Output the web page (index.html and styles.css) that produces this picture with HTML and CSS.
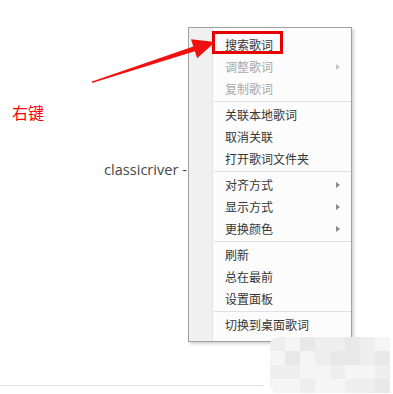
FILE: index.html
```html
<!DOCTYPE html>
<html lang="zh">
<head>
<meta charset="utf-8">
<link rel="stylesheet" href="styles.css">
</head>
<body>
<div class="page">
  <div class="content">
    <div class="hint">右键</div>
    <div class="title">classicriver -</div>
    <div class="rule"></div>
  </div>

  <div class="menu">
    <div class="item">搜索歌词</div>
    <div class="item disabled">调整歌词<span class="sub"></span></div>
    <div class="item disabled">复制歌词</div>
    <div class="sep"></div>
    <div class="item">关联本地歌词</div>
    <div class="item">取消关联</div>
    <div class="item">打开歌词文件夹</div>
    <div class="sep"></div>
    <div class="item">对齐方式<span class="sub"></span></div>
    <div class="item">显示方式<span class="sub"></span></div>
    <div class="item">更换颜色<span class="sub"></span></div>
    <div class="sep"></div>
    <div class="item">刷新</div>
    <div class="item">总在最前</div>
    <div class="item">设置面板</div>
    <div class="sep"></div>
    <div class="item">切换到桌面歌词</div>
  </div>

  <div class="highlight"></div>
  <svg class="arrow" width="393" height="394" viewBox="0 0 393 394">
    <polygon points="92,81.5 193.3,46.4 191,39.3 215,42 197.2,58.3 194.9,51.2 92,83" fill="#f01010"/>
  </svg>

  <div class="mosaic">
    <span class="m2"></span><span class="m1"></span><span class="m3"></span><span class="m2"></span><span class="m2"></span><span class="m3"></span><span class="m2"></span><span class="m1"></span>
    <span class="m1"></span><span class="m3"></span><span class="m1"></span><span class="m2"></span><span class="m3"></span><span class="m3"></span><span class="m2"></span><span class="m3"></span>
    <span class="m2"></span><span class="m2"></span><span class="m1"></span><span class="m1"></span><span class="m2"></span><span class="m1"></span><span class="m1"></span><span class="m2"></span>
    <span class="m1"></span><span class="m1"></span><span class="m2"></span><span class="m1"></span><span class="m1"></span><span class="m2"></span><span class="m2"></span><span class="m3"></span>
  </div>
</div>
</body>
</html>
```

FILE: styles.css
```css
html, body {
  margin: 0;
  padding: 0;
  background: #ffffff;
}

.page {
  position: relative;
  width: 393px;
  height: 394px;
  overflow: hidden;
  background: #ffffff;
}

.content {
  padding: 102px 0 0 12px;
}

.hint {
  font-family: "Noto Sans CJK SC", sans-serif;
  font-size: 16px;
  line-height: 20px;
  color: #ff0000;
}

.title {
  margin: 37px 0 0 92px;
  font-family: "Open Sans", "Noto Sans", sans-serif;
  font-size: 14.6px;
  line-height: 20px;
  color: #45474b;
}

.rule {
  margin: 206px 0 0 -12px;
  width: 263px;
  height: 1px;
  background: #e2e2e2;
}

.menu {
  position: absolute;
  left: 188px;
  top: 27px;
  width: 162px;
  border: 1px solid #a0a0a0;
  padding: 6px 0 5px 0;
  background: linear-gradient(to right, #f0f0f0 0, #f0f0f0 23px, #e2e3e3 23px, #e2e3e3 24px, #fcfcfc 24px);
  box-shadow: 2px 2px 3px rgba(0, 0, 0, 0.18);
  font-family: "Noto Sans CJK SC", sans-serif;
  font-size: 12px;
  color: #363636;
}

.item {
  display: flex;
  align-items: center;
  height: 22px;
  padding-left: 36px;
  line-height: 22px;
}

.item.disabled {
  color: #a9a9a9;
}

.sub {
  margin-left: auto;
  margin-right: 11px;
  width: 0;
  height: 0;
  border-left: 4px solid #8a8a8a;
  border-top: 3.5px solid transparent;
  border-bottom: 3.5px solid transparent;
}

.item.disabled .sub {
  border-left-color: #c8c8c8;
}

.sep {
  height: 1px;
  margin: 1px 0 2px 25px;
  background: #e0e0e0;
}

.highlight {
  position: absolute;
  left: 212px;
  top: 31px;
  width: 65px;
  height: 17px;
  border: 3px solid #e80000;
}

.arrow {
  position: absolute;
  left: 0;
  top: 0;
}

.mosaic {
  position: absolute;
  left: 270px;
  top: 337px;
  display: grid;
  grid-template-columns: repeat(8, 15px);
  grid-template-rows: repeat(4, 14px);
  border-radius: 8px 0 0 8px;
  overflow: hidden;
  filter: blur(0.6px);
}

.mosaic span { display: block; }
.m1 { background: #f5f5f5; }
.m2 { background: #eeeeee; }
.m3 { background: #e8e8e8; }
```
